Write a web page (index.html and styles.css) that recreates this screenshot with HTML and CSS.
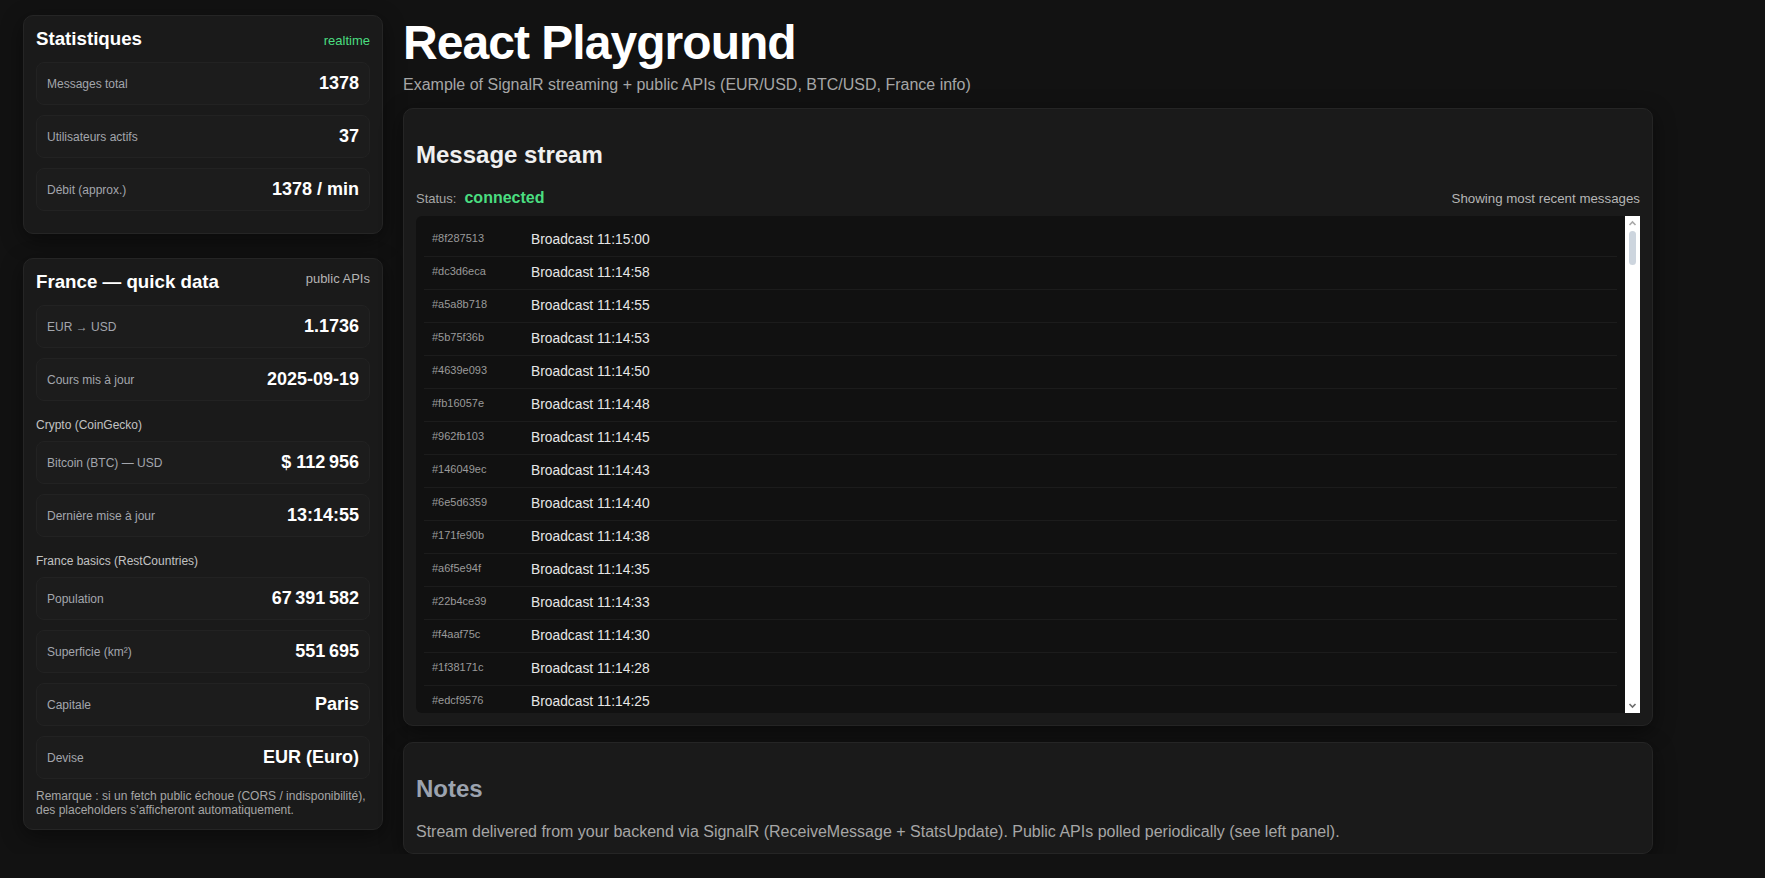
FILE: index.html
```html
<!DOCTYPE html>
<html lang="fr">
<head>
<meta charset="utf-8">
<title>React Playground</title>
<link rel="stylesheet" href="styles.css">
</head>
<body>
<div class="app">
  <aside class="sidebar">
    <section class="card">
      <header class="card-head card-head--baseline">
        <h3 class="card-title">Statistiques</h3>
        <span class="tag tag--live">realtime</span>
      </header>
      <div class="stat"><span class="stat-label">Messages total</span><span class="stat-value">1378</span></div>
      <div class="stat"><span class="stat-label">Utilisateurs actifs</span><span class="stat-value">37</span></div>
      <div class="stat"><span class="stat-label">Débit (approx.)</span><span class="stat-value">1378 / min</span></div>
    </section>

    <section class="card">
      <header class="card-head">
        <h3 class="card-title">France — quick data</h3>
        <span class="tag">public APIs</span>
      </header>
      <div class="stat"><span class="stat-label">EUR → USD</span><span class="stat-value">1.1736</span></div>
      <div class="stat"><span class="stat-label">Cours mis à jour</span><span class="stat-value">2025-09-19</span></div>
      <div class="group-label">Crypto (CoinGecko)</div>
      <div class="stat"><span class="stat-label">Bitcoin (BTC) — USD</span><span class="stat-value">$ 112&#8239;956</span></div>
      <div class="stat"><span class="stat-label">Dernière mise à jour</span><span class="stat-value">13:14:55</span></div>
      <div class="group-label">France basics (RestCountries)</div>
      <div class="stat"><span class="stat-label">Population</span><span class="stat-value">67&#8239;391&#8239;582</span></div>
      <div class="stat"><span class="stat-label">Superficie (km²)</span><span class="stat-value">551&#8239;695</span></div>
      <div class="stat"><span class="stat-label">Capitale</span><span class="stat-value">Paris</span></div>
      <div class="stat"><span class="stat-label">Devise</span><span class="stat-value">EUR (Euro)</span></div>
      <p class="remark">Remarque : si un fetch public échoue (CORS / indisponibilité), des placeholders s’afficheront automatiquement.</p>
    </section>
  </aside>

  <main class="main">
    <h1 class="title">React Playground</h1>
    <p class="subtitle">Example of SignalR streaming + public APIs (EUR/USD, BTC/USD, France info)</p>

    <section class="panel">
      <h2 class="panel-title">Message stream</h2>
      <div class="status-bar">
        <div class="status"><span class="status-label">Status:</span><span class="status-value">connected</span></div>
        <span class="hint">Showing most recent messages</span>
      </div>
      <div class="stream">
        <div class="stream-rows">
          <div class="msg"><span class="msg-id">#8f287513</span><span class="msg-text">Broadcast 11:15:00</span></div>
          <div class="msg"><span class="msg-id">#dc3d6eca</span><span class="msg-text">Broadcast 11:14:58</span></div>
          <div class="msg"><span class="msg-id">#a5a8b718</span><span class="msg-text">Broadcast 11:14:55</span></div>
          <div class="msg"><span class="msg-id">#5b75f36b</span><span class="msg-text">Broadcast 11:14:53</span></div>
          <div class="msg"><span class="msg-id">#4639e093</span><span class="msg-text">Broadcast 11:14:50</span></div>
          <div class="msg"><span class="msg-id">#fb16057e</span><span class="msg-text">Broadcast 11:14:48</span></div>
          <div class="msg"><span class="msg-id">#962fb103</span><span class="msg-text">Broadcast 11:14:45</span></div>
          <div class="msg"><span class="msg-id">#146049ec</span><span class="msg-text">Broadcast 11:14:43</span></div>
          <div class="msg"><span class="msg-id">#6e5d6359</span><span class="msg-text">Broadcast 11:14:40</span></div>
          <div class="msg"><span class="msg-id">#171fe90b</span><span class="msg-text">Broadcast 11:14:38</span></div>
          <div class="msg"><span class="msg-id">#a6f5e94f</span><span class="msg-text">Broadcast 11:14:35</span></div>
          <div class="msg"><span class="msg-id">#22b4ce39</span><span class="msg-text">Broadcast 11:14:33</span></div>
          <div class="msg"><span class="msg-id">#f4aaf75c</span><span class="msg-text">Broadcast 11:14:30</span></div>
          <div class="msg"><span class="msg-id">#1f38171c</span><span class="msg-text">Broadcast 11:14:28</span></div>
          <div class="msg"><span class="msg-id">#edcf9576</span><span class="msg-text">Broadcast 11:14:25</span></div>
        </div>
        <div class="scrollbar" aria-hidden="true">
          <svg class="scroll-arrow" width="15" height="15" viewBox="0 0 15 15"><path d="M4.5 9 L7.5 6 L10.5 9" fill="none" stroke="#a8a8a8" stroke-width="1.6"/></svg>
          <div class="scroll-thumb"></div>
          <div class="scroll-space"></div>
          <svg class="scroll-arrow" width="15" height="15" viewBox="0 0 15 15"><path d="M4.5 6 L7.5 9 L10.5 6" fill="none" stroke="#6e6e6e" stroke-width="1.6"/></svg>
        </div>
      </div>
    </section>

    <section class="panel">
      <h2 class="panel-title panel-title--muted">Notes</h2>
      <p class="notes-text">Stream delivered from your backend via SignalR (ReceiveMessage + StatsUpdate). Public APIs polled periodically (see left panel).</p>
    </section>
  </main>
</div>
</body>
</html>
```

FILE: styles.css
```css
* { box-sizing: border-box; }

html, body {
  margin: 0;
  background: #121212;
}

body {
  font-family: "Liberation Sans", Arial, sans-serif;
  color: #e5e5e5;
}

.app {
  display: grid;
  grid-template-columns: 360px 1250px;
  column-gap: 20px;
  align-items: start;
  padding: 15px 0 0 23px;
}

/* ---------- sidebar ---------- */
.sidebar {
  display: flex;
  flex-direction: column;
  gap: 24px;
}

.card {
  background: #1a1a1a;
  border: 1px solid #252525;
  border-radius: 10px;
  padding: 12px;
  box-shadow: 0 6px 22px rgba(0, 0, 0, 0.45);
}

.card-head {
  display: flex;
  justify-content: space-between;
  align-items: flex-start;
  margin-bottom: 12px;
}

.card-head--baseline { align-items: baseline; }

.card-title {
  margin: 0;
  font-size: 18.72px;
  font-weight: 700;
  color: #ffffff;
}

.tag {
  font-size: 13px;
  color: #b4b4b4;
}

.tag--live { color: #4ade80; }

.stat {
  display: flex;
  justify-content: space-between;
  align-items: center;
  padding: 10px;
  margin-bottom: 10px;
  background: #1c1c1c;
  border: 1px solid #222222;
  border-radius: 8px;
}

.stat-label {
  font-size: 12px;
  color: #a3a6ad;
}

.stat-value {
  font-size: 18px;
  font-weight: 700;
  color: #ffffff;
}

.group-label {
  font-size: 12px;
  color: #c2c2c2;
  margin: 17px 0 9px;
}

.remark {
  font-size: 12px;
  color: #a6a6a6;
  margin: 0;
}

/* ---------- main ---------- */
.title {
  margin: 0 0 6px;
  font-size: 48px;
  font-weight: 700;
  letter-spacing: -0.02em;
  color: #ffffff;
}

.subtitle {
  margin: 0 0 14px;
  font-size: 16px;
  color: #a6a6a6;
}

.panel {
  background: #1a1a1a;
  border: 1px solid #252525;
  border-radius: 10px;
  padding: 12px;
  box-shadow: 0 6px 22px rgba(0, 0, 0, 0.45);
}

.panel + .panel { margin-top: 16px; }

.panel-title {
  margin: 20px 0 20px;
  font-size: 24px;
  font-weight: 700;
  color: #f0f0f0;
}

.panel-title--muted { color: #9ca3af; }

.status-bar {
  display: flex;
  justify-content: space-between;
  align-items: center;
  margin-bottom: 9px;
}

.status {
  display: flex;
  align-items: baseline;
  gap: 8px;
}

.status-label {
  font-size: 13px;
  color: #a6a6a6;
}

.status-value {
  font-size: 16px;
  font-weight: 700;
  color: #4ade80;
}

.hint {
  font-size: 13.3px;
  color: #b5b5b5;
}

.stream {
  display: flex;
  height: 497px;
  background: #111111;
  border-radius: 6px 0 0 6px;
  overflow: hidden;
}

.stream-rows {
  flex: 1;
  min-width: 0;
  padding: 8px;
  overflow: hidden;
}

.scrollbar {
  width: 15px;
  flex-shrink: 0;
  display: flex;
  flex-direction: column;
  background: #ffffff;
}

.scroll-arrow {
  display: block;
  flex-shrink: 0;
}

.scroll-thumb {
  height: 34px;
  margin: 0 4px;
  border-radius: 4px;
  background: #cdd5de;
}

.scroll-space { flex: 1; }

.msg {
  display: flex;
  align-items: flex-start;
  padding: 8px;
  border-bottom: 1px solid #1c1c1c;
}

.msg-id {
  width: 99px;
  flex-shrink: 0;
  font-size: 11px;
  color: #9a9a9a;
}

.msg-text {
  font-size: 13.8px;
  line-height: 16px;
  color: #e6e6e6;
}

.notes-text {
  margin: 0;
  font-size: 16px;
  color: #a6a6a6;
}
```
